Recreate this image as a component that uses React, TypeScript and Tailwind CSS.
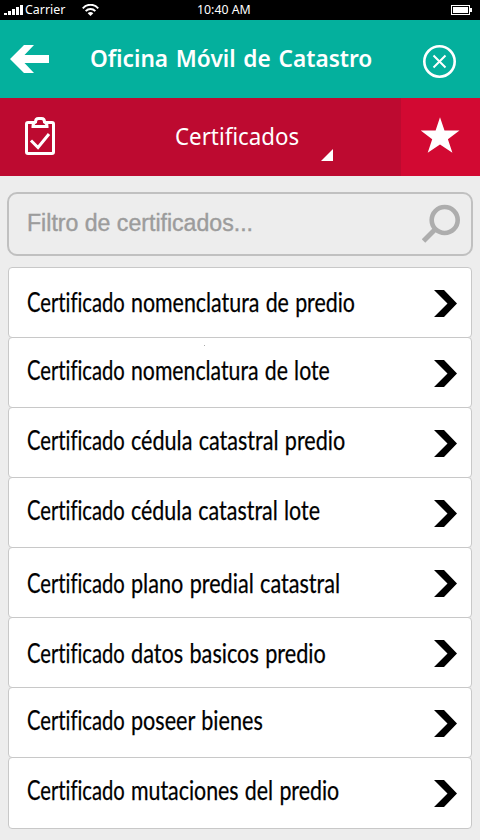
import { useLayoutEffect, useRef, useState } from "react";

type FitTextProps = { text: string; width: number; className?: string };

// One line of text, condensed or widened to fill the given width.
function FitText({ text, width, className = "" }: FitTextProps) {
  const ref = useRef<HTMLSpanElement>(null);
  const [scale, setScale] = useState(1);
  useLayoutEffect(() => {
    if (ref.current) setScale(width / ref.current.offsetWidth);
  }, [text, width]);
  return (
    <span className={`block whitespace-nowrap ${className}`} style={{ width }}>
      <span ref={ref} className="inline-block origin-left" style={{ transform: `scaleX(${scale})` }}>
        {text}
      </span>
    </span>
  );
}

const rows = [
  { text: "nomenclatura de predio", width: 223, pad: "pt-[17px]" },
  { text: "nomenclatura de lote", width: 198, pad: "pt-[15px]", speck: true },
  { text: "cédula catastral predio", width: 213, pad: "pt-[15px]" },
  { text: "cédula catastral lote", width: 188, pad: "pt-[15px]" },
  { text: "plano predial catastral", width: 208, pad: "pt-[18px]" },
  { text: "datos basicos predio", width: 194, pad: "pt-[18px]" },
  { text: "poseer bienes", width: 131, pad: "pt-[15px]" },
  { text: "mutaciones del predio", width: 207, pad: "pt-[15px]" },
];

function StatusBar() {
  return (
    <div className="flex h-5 items-center bg-black pl-1 pr-2 text-[13px] leading-5 text-white">
      <svg className="h-[10px] w-[19px]" viewBox="0 0 19 10" fill="#fff" shapeRendering="crispEdges">
        <path d="M0 8h3v2H0zM4 6h3v4H4zM8 4h3v6H8zM12 2h3v8h-3zM16 0h3v10h-3z" />
      </svg>
      <FitText text="Carrier" width={40} className="ml-[2px] -mt-[3px] h-5" />
      <svg className="ml-[17px] h-3 w-[17px]" viewBox="0 0 17 12" fill="none" stroke="#fff" strokeWidth="2">
        <path d="M.8 4.3C5-.4 12-.4 16.200 4.300M3.700 7.100c2.700-2.800 6.900-2.800 9.600 0" />
        <path d="M5.700 9.200c1.600-1.500 4-1.500 5.600 0L8.500 12z" fill="#fff" stroke="none" />
      </svg>
      <FitText text="10:40 AM" width={54} className="ml-[98px] -mt-[3px] h-5" />
      <svg className="ml-auto h-[10px] w-[21px]" viewBox="0 0 21 10" fill="#fff" shapeRendering="crispEdges">
        <path d="M0 0h19v3h2v4h-2v3H0zM1 1v8h17V1z" fillRule="evenodd" />
        <path d="M2 2h15v6H2z" />
      </svg>
    </div>
  );
}

export default function App() {
  return (
    <div className="h-[840px] w-[480px] overflow-hidden bg-[#ededed] font-['Noto_Sans',sans-serif]">
      <StatusBar />
      <header className="flex h-[78px] bg-[#04b09d] text-white">
        <svg className="ml-[10px] mt-[25px] h-7 w-[39px]" viewBox="0 0 39 28" fill="#fff">
          <path d="M0 14 14 0h10L14.500 10H39v8H14.500L24 28H14z" />
        </svg>
        <FitText
          text="Oficina Móvil de Catastro"
          width={282}
          className="ml-[41px] mt-[21px] h-[34px] text-2xl leading-[34px] font-semibold [word-spacing:2px]"
        />
        <svg className="ml-[50px] mt-[25px] h-[34px] w-[34px]" viewBox="0 0 34 34" fill="none" stroke="#fff">
          <circle cx="17.500" cy="16.500" r="15.200" strokeWidth="2.600" />
          <path d="m11.500 10.500 12 12m0-12-12 12" strokeWidth="2" />
        </svg>
      </header>
      <nav className="flex h-[78px] bg-[#bd0a30] text-white">
        <svg className="ml-[25px] mt-[19px] h-[38px] w-[30px]" viewBox="0 0 30 38" fill="none" stroke="#fff">
          <rect x="1.500" y="5.500" width="27" height="31" rx="1.500" strokeWidth="3" />
          <path d="M8 9.500h14c0-2.500-1-4-2.500-4.500 0-2.500-1-3.500-3-3.500h-3c-2 0-3 1-3 3.500C9 5.500 8 7 8 9.500z" strokeWidth="3" fill="#bd0a30" />
          <path d="m6 23.500 7 7 11-13.500" strokeWidth="3" />
        </svg>
        <FitText
          text="Certificados"
          width={124}
          className="ml-[120px] mt-[21px] h-[34px] text-[23px] leading-[34px]"
        />
        <svg className="ml-[22px] mt-[51px] h-3 w-3" viewBox="0 0 12 12" fill="#fff">
          <path d="M12 0v12H0z" />
        </svg>
        <div className="ml-auto h-full w-[79px] bg-[#d20932] pl-[19px] pt-[19px]">
          <svg className="h-9 w-10" viewBox="-.5 -.2 40 36" fill="#fff">
            <path d="m19.500 0 4.500 13.200H39L27.400 22l4.500 13.500-12.400-8.200-12.300 8.200L11.700 22 .2 13.200h14.900z" />
          </svg>
        </div>
      </nav>
      <main className="px-2 pt-4">
        <div className="-mx-px flex h-16 rounded-[10px] border-2 border-[#c0c0c0] pl-[18px]">
          <FitText
            text="Filtro de certificados..."
            width={226}
            className="mt-[15px] h-7 font-['Liberation_Sans',Arial,sans-serif] text-[23px] leading-7 text-[#9c9c9c] [-webkit-text-stroke:0.4px_#9c9c9c]"
          />
          <svg className="ml-auto mr-[10px] mt-[10px] h-[39px] w-[39px]" viewBox="0 0 39 39" fill="none" stroke="#adadad">
            <circle cx="22.700" cy="16" r="13" strokeWidth="4.600" />
            <path d="M13.500 25 1.500 37" strokeWidth="5" />
          </svg>
        </div>
        <ul className="mt-[11px]">
          {rows.map((row) => (
            <li
              key={row.text}
              className="relative -mb-px flex h-[71px] justify-between rounded-[4px] border border-[#c8c8c8] bg-white pl-[18px] pr-[14px] text-black last:h-[72px]"
            >
              {row.speck && <span className="absolute left-[195px] top-[7px] size-px bg-[#aaa]" />}
              <div
                className={`flex gap-[6px] font-['Lato',sans-serif] text-[27px] leading-[34px] [font-variant-ligatures:none] [word-spacing:1px] [-webkit-text-stroke:0.25px_#000] ${row.pad}`}
              >
                <FitText text="Certificado" width={98} />
                <FitText text={row.text} width={row.width + 1} />
              </div>
              <svg className="mt-[22px] h-[27px] w-[23px]" viewBox="0 0 23 27" fill="#000">
                <path d="M0 0h10l13 13.500L10 27H0l13.500-13.500z" />
              </svg>
            </li>
          ))}
        </ul>
      </main>
    </div>
  );
}
